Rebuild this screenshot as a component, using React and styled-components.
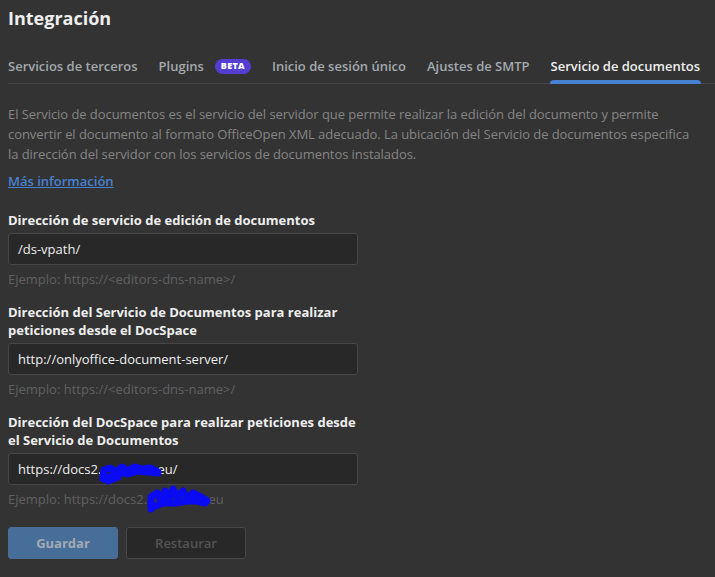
import React from 'react'
import styled, { createGlobalStyle } from 'styled-components'

const GlobalStyle = createGlobalStyle`
  html, body {
    margin: 0;
    background: #333333;
    font-family: "Open Sans", "Liberation Sans", sans-serif;
  }
`

const Page = styled.main`
  padding: 0 8px;
  color: #eeeeee;
  min-height: 577px;
  box-sizing: border-box;
`

const Title = styled.h1`
  margin: 0;
  padding-top: 5px;
  font-size: 18px;
  font-weight: 700;
  line-height: 26px;
  color: #eeeeee;
`

const Tabs = styled.nav`
  display: flex;
  gap: 21px;
  margin-top: 25px;
  margin-right: -8px;
  border-bottom: 1px solid #474747;
`

const Tab = styled.div`
  position: relative;
  display: flex;
  align-items: center;
  gap: 11px;
  padding-bottom: 7px;
  font-size: 13px;
  font-weight: 600;
  line-height: 20px;
  white-space: nowrap;
  color: ${p => (p.$active ? '#eeeeee' : '#a3a9ae')};

  ${p => p.$active && `
    &::after {
      content: '';
      position: absolute;
      left: -1px;
      right: -1px;
      bottom: -1px;
      height: 4px;
      border-radius: 4px 4px 0 0;
      background: #4781d1;
    }
  `}
`

const Badge = styled.span`
  display: inline-flex;
  align-items: center;
  height: 15px;
  padding: 0 6px;
  border-radius: 8px;
  background: #533ed1;
  color: #ffffff;
  font-size: 9px;
  font-weight: 800;
  letter-spacing: 0.3px;
`

const Description = styled.p`
  margin: 20px 0 0;
  max-width: 692px;
  font-size: 13px;
  line-height: 20px;
  letter-spacing: -0.06px;
  color: #858585;
`

const MoreLink = styled.a`
  display: inline-block;
  margin-top: 7px;
  font-size: 13px;
  font-weight: 600;
  line-height: 20px;
  color: #4781d1;
  text-decoration: underline;
`

const Form = styled.div`
  display: flex;
  flex-direction: column;
  gap: 14px;
  margin-top: 20px;
  width: 350px;
`

const Field = styled.div`
  display: flex;
  flex-direction: column;
`

const Label = styled.label`
  font-size: 13px;
  font-weight: 700;
  line-height: 18px;
  color: #eeeeee;
  margin-bottom: 4px;
`

const Input = styled.div`
  position: relative;
  height: 32px;
  box-sizing: border-box;
  display: flex;
  align-items: center;
  padding: 0 9px;
  background: #282828;
  border: 1px solid #474747;
  border-radius: 3px;
  font-size: 13px;
  color: #eeeeee;
  white-space: nowrap;
`

const Hint = styled.div`
  margin-top: 4px;
  font-size: 13px;
  line-height: 20px;
  color: #606060;
  white-space: nowrap;
`

const Hidden = styled.span`
  position: relative;
  display: inline-block;
  width: ${p => p.$w}px;
  height: 1em;
`

const Blot = styled.svg`
  position: absolute;
  left: ${p => p.$x}px;
  top: ${p => p.$y}px;
  overflow: visible;
`

const Buttons = styled.div`
  display: flex;
  gap: 8px;
  margin-top: 18px;
`

const Button = styled.button`
  height: 32px;
  width: ${p => p.$w}px;
  border-radius: 3px;
  font-family: inherit;
  font-size: 13px;
  border: 1px solid ${p => (p.$primary ? '#4a6e96' : '#474747')};
  background: ${p => (p.$primary ? '#466e99' : '#282828')};
  color: ${p => (p.$primary ? '#a3aab3' : '#545454')};
  font-weight: ${p => (p.$primary ? 700 : 600)};
`

const Scribble = ({ w, h, x, y, d }) => (
  <Hidden $w={w}>
    <Blot $x={x} $y={y} width={w + 12} height={h} viewBox={`0 0 ${w + 12} ${h}`}>
      <path d={d} fill="none" stroke="#0a0af5" strokeWidth="7" strokeLinecap="round" strokeLinejoin="round" />
    </Blot>
  </Hidden>
)

const tabs = [
  { label: 'Servicios de terceros' },
  { label: 'Plugins', beta: true },
  { label: 'Inicio de sesión único' },
  { label: 'Ajustes de SMTP' },
  { label: 'Servicio de documentos', active: true },
]

const App = () => (
  <>
    <GlobalStyle />
    <Page>
      <Title>Integración</Title>
      <Tabs>
        {tabs.map(t => (
          <Tab key={t.label} $active={t.active}>
            {t.label}
            {t.beta && <Badge>BETA</Badge>}
          </Tab>
        ))}
      </Tabs>
      <Description>
        El Servicio de documentos es el servicio del servidor que permite realizar la edición del documento y permite
        convertir el documento al formato OfficeOpen XML adecuado. La ubicación del Servicio de documentos especifica
        la dirección del servidor con los servicios de documentos instalados.
      </Description>
      <MoreLink href="#">Más información</MoreLink>
      <Form>
        <Field>
          <Label>Dirección de servicio de edición de documentos</Label>
          <Input>/ds-vpath/</Input>
          <Hint>Ejemplo: https://&lt;editors-dns-name&gt;/</Hint>
        </Field>
        <Field>
          <Label>Dirección del Servicio de Documentos para realizar peticiones desde el DocSpace</Label>
          <Input>http://onlyoffice-document-server/</Input>
          <Hint>Ejemplo: https://&lt;editors-dns-name&gt;/</Hint>
        </Field>
        <Field>
          <Label>Dirección del DocSpace para realizar peticiones desde el Servicio de Documentos</Label>
          <Input>
            https://docs2.
            <Scribble
              w={56}
              h={24}
              x={-3}
              y={-3}
              d="M5 17 L6 10 L12 8 L18 12 L24 7 L30 11 L36 7 L44 9 L52 8 L60 12 M5 19 L14 16 L22 12 L30 14 L40 11 L50 12 L60 13 M10 21 L20 17"
            />
            eu/
          </Input>
          <Hint>
            Ejemplo: https://docs2.
            <Scribble
              w={58}
              h={30}
              x={-2}
              y={-8}
              d="M6 26 L6 14 L12 10 L16 18 L20 8 L24 16 L28 6 L32 14 L38 8 L42 16 L48 10 L56 14 L62 18 M8 24 L18 20 L30 20 L42 18 L52 18 L60 20"
            />
            .eu
          </Hint>
        </Field>
      </Form>
      <Buttons>
        <Button $primary $w={110}>Guardar</Button>
        <Button $w={120}>Restaurar</Button>
      </Buttons>
    </Page>
  </>
)

export default App
